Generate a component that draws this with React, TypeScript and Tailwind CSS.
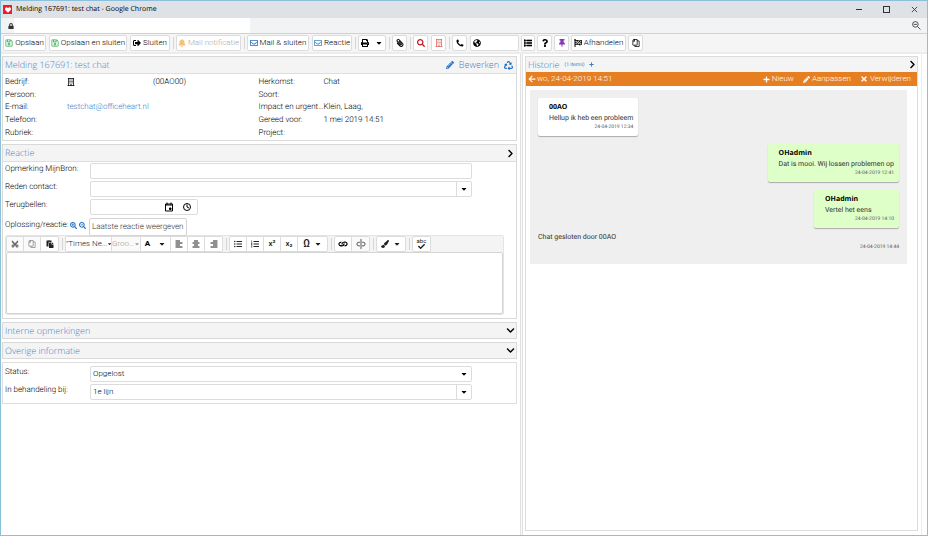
import type { ReactNode } from "react";
import {
  FaArrowLeft,
  FaBell,
  FaCaretDown,
  FaCheck,
  FaChevronDown,
  FaChevronRight,
  FaGlobeAmericas,
  FaHeart,
  FaLink,
  FaList,
  FaListOl,
  FaListUl,
  FaLock,
  FaPaperclip,
  FaPaste,
  FaPencilAlt,
  FaPlus,
  FaPrint,
  FaQuestion,
  FaRecycle,
  FaRegBuilding,
  FaRegCopy,
  FaRegEnvelope,
  FaRegSave,
  FaSearch,
  FaSearchMinus,
  FaSearchPlus,
  FaSignOutAlt,
  FaFlagCheckered,
  FaThumbtack,
  FaTimes,
  FaUnlink,
  FaAlignCenter,
  FaAlignLeft,
  FaAlignRight,
  FaCut,
  FaPaintBrush,
} from "react-icons/fa";

const iconBlue = "text-[#1f6fc4]";
const headingFont = "font-['Open_Sans','Noto_Sans',sans-serif]";

function ToolButton({ width, label, children, muted }: { width: string; label: string; children: ReactNode; muted?: boolean }) {
  return (
    <button
      aria-label={label}
      disabled={muted}
      className={`flex h-4 shrink-0 items-center justify-center gap-[2px] whitespace-nowrap rounded-xs border border-[#dcdcdc] bg-white text-[8px] leading-3 ${width} ${muted ? "text-[#aaa]" : "text-black"}`}
    >
      {children}
    </button>
  );
}

function Separator() {
  return <span className="-mr-px h-3 w-px shrink-0 bg-[#d6d6d6]" />;
}

function Toolbar() {
  return (
    <div className="flex h-5 items-center gap-[3px] overflow-hidden border-b-2 border-[#ececec] bg-[#f5f5f5] pl-[2px]">
      <ToolButton width="w-[43px]" label="Opslaan"><FaRegSave className="text-[#2fa84f]" />Opslaan</ToolButton>
      <ToolButton width="w-[78px]" label="Opslaan en sluiten"><FaRegSave className="text-[#2fa84f]" />Opslaan en sluiten</ToolButton>
      <ToolButton width="w-10" label="Sluiten"><FaSignOutAlt className="text-black" />Sluiten</ToolButton>
      <Separator />
      <ToolButton width="w-[65px]" label="Mail notificatie" muted><FaBell className="text-[#f5c27a]" />Mail notificatie</ToolButton>
      <Separator />
      <ToolButton width="w-[62px]" label="Mail & sluiten"><FaRegEnvelope className={iconBlue} />Mail &amp; sluiten</ToolButton>
      <ToolButton width="w-10" label="Reactie"><FaRegEnvelope className="text-[#3a8ac8]" />Reactie</ToolButton>
      <Separator />
      <ToolButton width="w-7" label="Afdrukken"><FaPrint /><FaCaretDown className="ml-1" /></ToolButton>
      <Separator />
      <ToolButton width="w-[15px]" label="Bijlage"><FaPaperclip className="-scale-x-100" /></ToolButton>
      <Separator />
      <ToolButton width="w-[15px]" label="Zoeken"><FaSearch className="text-[#c4161c]" /></ToolButton>
      <ToolButton width="w-[15px]" label="Bedrijf"><FaRegBuilding className="text-[#e0605a]" /></ToolButton>
      <Separator />
      <ToolButton width="w-[15px]" label="Bellen">
        <svg viewBox="0 0 16 16" className="size-2" fill="currentColor" aria-hidden="true">
          <path d="M1 3C1 2 3 1 4 1c.7 0 1.600 2.600 2 3.700.2.700-1.600 1.500-1.600 2.200 0 1 3.700 4.700 4.700 4.700.7 0 1.500-1.800 2.200-1.600C12.400 10.400 15 11.400 15 12c0 1-1 3-2 3C7 15.500.5 9 1 3z" />
        </svg>
      </ToolButton>
      <div className="flex gap-[2px]">
        <div className="flex h-4 w-[49px] shrink-0 items-center rounded-xs border border-[#dcdcdc] bg-white pl-[2px] text-[8px]">
          <FaGlobeAmericas className="shrink-0" />
          <input aria-label="Website" className="w-full min-w-0 outline-none" />
        </div>
        <ToolButton width="w-[14px]" label="Lijst"><FaList className="shrink-0" strokeWidth={40} stroke="currentColor" /></ToolButton>
        <ToolButton width="w-[15px]" label="Help"><FaQuestion /></ToolButton>
        <ToolButton width="w-[15px]" label="Vastzetten"><FaThumbtack className="text-[#8a35b5]" /></ToolButton>
        <ToolButton width="w-[55px]" label="Afhandelen"><FaFlagCheckered className="text-black" />Afhandelen</ToolButton>
        <ToolButton width="w-[15px]" label="Kopiëren"><FaRegCopy className="-scale-x-100" /></ToolButton>
      </div>
    </div>
  );
}

function PanelHeader({ title, children, height = "h-4" }: { title: string; children?: ReactNode; height?: string }) {
  return (
    <div className={`flex items-center justify-between bg-[#f4f4f4] pl-[2px] pr-px text-[9px] leading-3 text-[#3f82c8] ${headingFont} ${height}`}>
      <h2>{title}</h2>
      {children}
    </div>
  );
}

const details = [
  ["Bedrijf:", "Herkomst:", "Chat"],
  ["Persoon:", "Soort:", ""],
  ["E-mail:", "Impact en urgent…", "Klein, Laag,"],
  ["Telefoon:", "Gereed voor:", "1 mei 2019 14:51"],
  ["Rubriek:", "Project:", ""],
];

function DetailsPanel() {
  return (
    <section className="border border-[#d9d9d9] bg-white">
      <PanelHeader title="Melding 167691: test chat">
        <div className="flex items-center gap-[5px] pr-[2px]">
          <button className="flex items-center gap-[5px]"><FaPencilAlt className={`text-[8px] ${iconBlue}`} />Bewerken</button>
          <button aria-label="Vernieuwen"><FaRecycle className={iconBlue} /></button>
        </div>
      </PanelHeader>
      <dl className="grid h-[67px] grid-rows-5 border-t border-[#dedede] pb-px pl-[2px] pt-[2px] text-black">
        {details.map(([left, right, value]) => (
          <div key={left} className="grid grid-cols-[62fr_192fr_65fr_193fr] items-center whitespace-nowrap">
            <dt className="min-w-0">{left}</dt>
            <dd className="min-w-0">
              {left === "Bedrijf:" && (
                <span className="flex items-center"><FaRegBuilding className="text-[8px]" /><span className="ml-[78px]">(00AO00)</span></span>
              )}
              {left === "E-mail:" && <a href="#mail" className="text-[#3f82c8]">testchat@officeheart.nl</a>}
            </dd>
            <dt className="min-w-0">{right}</dt>
            <dd className="min-w-0">{value}</dd>
          </div>
        ))}
      </dl>
    </section>
  );
}

const fieldBox = "h-4 w-full rounded-xs border border-[#dcdcdc] bg-white px-[2px] text-black outline-none";

function Field({ id, label, children }: { id: string; label: string; children: ReactNode }) {
  return (
    <div className="flex">
      <label htmlFor={id} className="w-[85px] shrink-0 whitespace-nowrap leading-3">{label}</label>
      <div className="mr-11 min-w-0 flex-1">{children}</div>
    </div>
  );
}

function Dropdown({ id, value, divided }: { id: string; value: string; divided?: boolean }) {
  return (
    <div className="relative">
      <select id={id} defaultValue={value} className={`${fieldBox} block appearance-none`}>
        <option>{value}</option>
      </select>
      <span className={`pointer-events-none absolute inset-y-px right-px flex w-[15px] items-center justify-center text-black ${divided ? "border-l border-[#dcdcdc]" : ""}`}>
        <FaCaretDown className="text-[8px]" />
      </span>
    </div>
  );
}

function EditorButton({ label, children, width = "w-[17px]", muted }: { label: string; children: ReactNode; width?: string; muted?: boolean }) {
  return (
    <button aria-label={label} disabled={muted} className={`flex h-full items-center justify-center whitespace-nowrap text-[8px] ${width} ${muted ? "bg-[#fafafa] text-[#999]" : "text-[#222]"}`}>
      {children}
    </button>
  );
}

function EditorGroup({ children }: { children: ReactNode }) {
  return <div className="flex h-4 shrink-0 items-center divide-x divide-[#dcdcdc] rounded-xs border border-[#dcdcdc] bg-white">{children}</div>;
}

function CalendarIcon() {
  return (
    <svg viewBox="0 0 20 20" className="size-[10px]" fill="none" stroke="currentColor" strokeWidth="2" aria-hidden="true">
      <path d="M3 4h14v14H3zM3 6h14M6 1v4M14 1v4" />
      <path d="M11 12h3v3h-3z" fill="currentColor" />
    </svg>
  );
}

function ClockIcon() {
  return (
    <svg viewBox="0 0 20 20" className="size-[10px]" fill="none" stroke="currentColor" strokeWidth="2" aria-hidden="true">
      <circle cx="10" cy="10" r="7" />
      <path d="M10 5v5l4 2" />
    </svg>
  );
}

function Editor() {
  return (
    <div className="mr-3 rounded-xs border border-[#e4e4e4]">
      <div className="flex h-4 items-center gap-[3px] bg-[#f4f4f4]">
        <EditorGroup>
          <EditorButton label="Knippen" muted><FaCut className="-rotate-90 text-[#666]" /></EditorButton>
          <EditorButton label="Kopiëren" muted><FaRegCopy className="-scale-x-100 text-[#888]" /></EditorButton>
          <EditorButton label="Plakken"><FaPaste /></EditorButton>
        </EditorGroup>
        <Separator />
        <EditorGroup>
          <EditorButton label="Lettertype" width="w-[46px]">&quot;Times Ne...<FaCaretDown className="text-[6px]" /></EditorButton>
          <EditorButton label="Grootte" width="w-[29px]" muted>Groo…<FaCaretDown className="shrink-0 text-[6px]" /></EditorButton>
          <EditorButton label="Tekstkleur" width="w-[30px]"><b className="font-extrabold text-black">A</b><FaCaretDown className="ml-2" /></EditorButton>
          <EditorButton label="Links uitlijnen"><FaAlignLeft /></EditorButton>
          <EditorButton label="Centreren"><FaAlignCenter /></EditorButton>
          <EditorButton label="Rechts uitlijnen"><FaAlignRight /></EditorButton>
        </EditorGroup>
        <Separator />
        <EditorGroup>
          <EditorButton label="Opsomming"><FaListUl /></EditorButton>
          <EditorButton label="Nummering"><FaListOl /></EditorButton>
          <EditorButton label="Superscript"><span className="font-medium">x²</span></EditorButton>
          <EditorButton label="Subscript"><span className="font-medium">x₂</span></EditorButton>
          <EditorButton label="Symbool" width="w-[29px]"><span className="text-[10px] font-medium">Ω</span><FaCaretDown className="ml-1" /></EditorButton>
        </EditorGroup>
        <Separator />
        <EditorGroup>
          <EditorButton label="Link"><FaLink className="rotate-45 text-black" /></EditorButton>
          <EditorButton label="Link verwijderen" muted><FaUnlink className="rotate-45 text-[#777]" /></EditorButton>
        </EditorGroup>
        <Separator />
        <EditorGroup>
          <EditorButton label="Opmaak wissen" width="w-7"><FaPaintBrush /><FaCaretDown className="ml-1" /></EditorButton>
        </EditorGroup>
        <Separator />
        <EditorGroup>
          <EditorButton label="Spelling">
            <span className="flex flex-col items-center"><b className="text-[6px] leading-[4px]">abc</b><FaCheck className="text-[7px]" /></span>
          </EditorButton>
        </EditorGroup>
      </div>
      <textarea id="oplossing" className="block h-[62px] w-full resize-none rounded-xs border border-[#d4d4d4] bg-white outline-none" />
    </div>
  );
}

function ReactionPanel() {
  return (
    <section className="border border-[#d9d9d9] bg-white">
      <PanelHeader title="Reactie">
        <button aria-label="Openen" className="text-[9px] text-black"><FaChevronRight /></button>
      </PanelHeader>
      <div className="flex flex-col gap-[2px] border-t border-[#dedede] pb-[3px] pl-[2px] pt-px text-black">
        <Field id="opmerking" label="Opmerking MijnBron:"><input id="opmerking" className={`${fieldBox} block`} /></Field>
        <Field id="reden" label="Reden contact:"><Dropdown id="reden" value="" divided /></Field>
        <Field id="terugbellen" label="Terugbellen:">
          <div className="flex h-4 w-[108px] items-center gap-2 rounded-xs border border-[#dcdcdc] pr-[5px]">
            <input id="terugbellen" className="w-full min-w-0 px-[3px] outline-none" />
            <button aria-label="Datum kiezen"><CalendarIcon /></button>
            <button aria-label="Tijd kiezen"><ClockIcon /></button>
          </div>
        </Field>
        <div className="relative flex h-4 items-center gap-[2px] whitespace-nowrap">
          <label htmlFor="oplossing">Oplossing/reactie:</label>
          <button aria-label="Vergroten" className={`text-[7px] ${iconBlue}`}><FaSearchPlus /></button>
          <button aria-label="Verkleinen" className={`text-[7px] ${iconBlue}`}><FaSearchMinus /></button>
          <span role="tooltip" className="absolute left-[84px] top-px z-10 rounded-xs border border-[#d4d4d4] bg-white px-[2px] py-[2px] text-[8px] leading-3 text-[#333]">
            Laatste reactie weergeven
          </span>
        </div>
        <Editor />
      </div>
    </section>
  );
}

function CollapsedPanel({ title }: { title: string }) {
  return (
    <section className="border border-[#d9d9d9]">
      <PanelHeader title={title} height="h-[15px]">
        <button aria-label={`${title} uitklappen`} className="text-[9px] text-black"><FaChevronDown /></button>
      </PanelHeader>
    </section>
  );
}

function Message({ author, text, time, own }: { author: string; text: string; time: string; own?: boolean }) {
  return (
    <article className={`w-fit min-w-[85px] rounded-xs pb-[5px] pl-[11px] pr-[5px] pt-[5px] shadow-[0_1px_1px_#aaa] ${own ? "self-end bg-[#dfffc8]" : "bg-white"}`}>
      <h3 className={`text-[7px] font-bold leading-[10px] text-black ${headingFont}`}>{author}</h3>
      <p className="text-[7px] font-normal leading-[10px] text-[#333]">{text}</p>
      <time className="block text-right text-[5px] font-normal leading-2 text-[#555]">{time}</time>
    </article>
  );
}

function History() {
  return (
    <section className="mb-1 mr-[2px] flex-1 border border-[#dcdcdc] bg-white">
      <div className="flex h-[15px] items-center justify-between bg-[#f4f4f4] pl-[2px] text-[#3a7fc6]">
        <div className="flex items-center gap-[5px]">
          <h2 className={`text-[9px] leading-3 ${headingFont}`}>Historie</h2>
          <span className="text-[5px] font-normal">(1 items)</span>
          <button aria-label="Toevoegen" className="text-[5px]"><FaPlus /></button>
        </div>
        <button aria-label="Openen" className="text-[9px] text-black"><FaChevronRight /></button>
      </div>
      <div className="flex h-[14px] items-center justify-between bg-[#e67e22] pl-[2px] pr-[6px] text-[8px] leading-3 text-white">
        <button className="flex items-center gap-px"><FaArrowLeft />wo, 24-04-2019 14:51</button>
        <div className="flex items-center gap-[9px]">
          <button className="flex items-center gap-[2px]"><FaPlus className="text-[7px]" />Nieuw</button>
          <button className="flex items-center gap-[2px]"><FaPencilAlt className="text-[7px]" />Aanpassen</button>
          <button className="flex items-center gap-[2px]"><FaTimes />Verwijderen</button>
        </div>
      </div>
      <div className="ml-1 mr-[10px] mt-1 flex flex-col gap-2 bg-[#efefef] px-2 pb-3 pt-2">
        <Message author="00AO" text="Hellup ik heb een probleem" time="24-04-2019 12:34" />
        <Message own author="OHadmin" text="Dat is mooi. Wij lossen problemen op" time="24-04-2019 12:41" />
        <Message own author="OHadmin" text="Vertel het eens" time="24-04-2019 14:10" />
        <div className="-mt-1">
          <p className="text-[7px] font-normal leading-[10px] text-[#333]">Chat gesloten door 00AO</p>
          <time className="block text-right text-[5px] font-normal leading-[10px] text-[#555]">24-04-2019 14:44</time>
        </div>
      </div>
    </section>
  );
}

export default function App() {
  return (
    <div className="flex min-h-screen flex-col border border-[#8cc0da] bg-white font-['Roboto','Open_Sans',sans-serif] text-[8px] font-light leading-3 [text-rendering:geometricPrecision]">
      <header className="flex h-[17px] items-center bg-[#dee1e6] pl-[2px] pr-[9px]">
        <span className="flex size-[9px] items-center justify-center bg-[#ee1c25] text-[6px] text-white"><FaHeart /></span>
        <h1 className={`ml-1 flex-1 text-[7px] font-normal leading-3 text-black ${headingFont}`}>Melding 167691: test chat - Google Chrome</h1>
        <div className="flex items-center gap-[21px] text-[#333]">
          <button aria-label="Minimaliseren" className="flex h-[6px] w-[6px] items-center"><span className="h-px w-full bg-[#333]" /></button>
          <button aria-label="Maximaliseren" className="size-[7px] border border-[#333]" />
          <button aria-label="Sluiten">
            <svg viewBox="0 0 8 8" className="size-[7px]" stroke="currentColor" aria-hidden="true"><path d="M1 1l6 6M7 1L1 7" /></svg>
          </button>
        </div>
      </header>
      <div className="flex h-4 items-center border-b border-[#d0d0d0] bg-[#f1f3f4] pl-[7px] pr-[6px] text-[#333]">
        <FaLock className="text-[6px]" />
        <input aria-label="Adres" className="h-[15px] w-[236px] bg-white outline-none" />
        <button aria-label="Zoom" className="ml-auto">
          <svg viewBox="0 0 16 16" className="size-[9px]" fill="none" stroke="currentColor" strokeWidth="1.5" aria-hidden="true">
            <circle cx="6" cy="6" r="5" /><path d="M10 10l5 5M3 6h6" />
          </svg>
        </button>
      </div>
      <Toolbar />
      <main className="grid flex-1 grid-cols-[minmax(0,519fr)_minmax(0,407fr)]">
        <div className="flex flex-col gap-[3px] pl-px pr-[3px] pt-[2px]">
          <DetailsPanel />
          <ReactionPanel />
          <CollapsedPanel title="Interne opmerkingen" />
          <CollapsedPanel title="Overige informatie" />
          <section className="flex flex-col gap-[2px] border border-[#dedede] bg-white pb-[3px] pl-[2px] pt-[3px] text-black">
            <Field id="status" label="Status:"><Dropdown id="status" value="Opgelost" /></Field>
            <Field id="behandeling" label="In behandeling bij:"><Dropdown id="behandeling" value="1e lijn" divided /></Field>
          </section>
        </div>
        <div className="flex pr-[5px]">
          <div className="w-[3px] shrink-0 border-x border-[#e2e2e2] bg-[#f8f8f8]" />
          <div className="flex min-w-0 flex-1 border-r border-[#ececec] pl-[2px] pr-px pt-[2px]">
            <History />
          </div>
        </div>
      </main>
    </div>
  );
}
